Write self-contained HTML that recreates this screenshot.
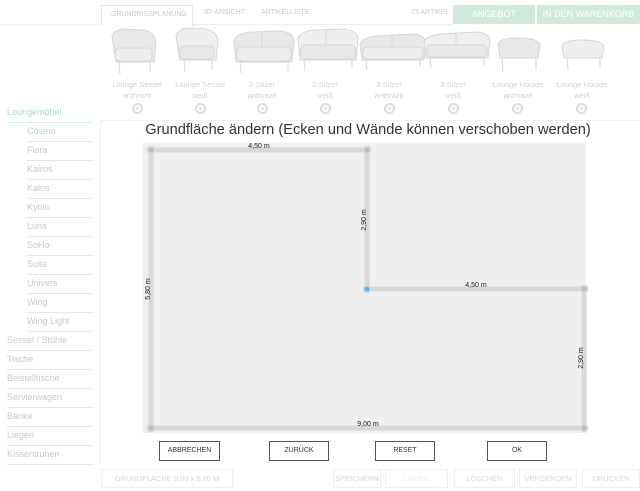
<!DOCTYPE html>
<html><head><meta charset="utf-8"><style>
*{margin:0;padding:0;box-sizing:border-box}
body{width:640px;height:491px;background:#fff;font-family:"Liberation Sans",sans-serif;position:relative;overflow:hidden}
.a{position:absolute;white-space:nowrap}
.tab{font-size:7px;color:#c8c8c8;top:9px}
.lbl{font-size:7.5px;color:#d0d0d0;text-align:center;width:64px;line-height:11px;top:79px}
.dot{width:11px;height:11px;border-radius:50%;border:2px solid #ddd;top:103px}
.dot:after{content:"";position:absolute;left:2px;top:2px;width:3px;height:3px;border-radius:50%;background:#ddd}
.side{font-size:9px;color:#c8c8c8;height:19px;line-height:17px;border-bottom:1px solid #e4e4e4}
.btn{top:441px;height:20px;border:1px solid #555;font-size:7px;color:#333;text-align:center;line-height:18px}
.bb{top:469px;height:19px;border:1px solid #eee;font-size:7.5px;color:#d6d6d6;text-align:center;line-height:17px}
</style></head><body>
<div class="a" style="left:0;top:24px;width:100px;height:1px;background:#eee"></div>
<div class="a" style="left:193px;top:24px;width:260px;height:1px;background:#eee"></div>
<div class="a" style="left:101px;top:5px;width:92px;height:21px;border:1px solid #e4e4e4;border-bottom:none;background:#fff"></div>
<div class="a tab" style="left:111px;top:11px">GRUNDRISSPLANUNG</div>
<div class="a tab" style="left:203px">3D-ANSICHT</div>
<div class="a tab" style="left:261px">ARTIKELLISTE</div>
<div class="a tab" style="left:411px">23 ARTIKEL</div>
<div class="a" style="left:453px;top:5px;width:82px;height:19px;background:#cfe9db;color:#fff;font-size:9px;text-align:center;line-height:19px">ANGEBOT</div>
<div class="a" style="left:537px;top:5px;width:103px;height:19px;background:#cfe9db;color:#fff;font-size:9px;text-align:center;line-height:19px">IN DEN WARENKORB</div>

<svg class="a" style="left:100px;top:26px" width="540" height="50" viewBox="0 0 540 50" fill="#e8e8e8" stroke="#d6d6d6" stroke-width="1">
<g><path d="M12 10 Q14 4 24 3 L44 4 Q54 6 56 16 L54 36 L16 36 Z"/><rect x="15" y="22" width="37" height="13" rx="4" fill="#eeeeee"/><line x1="19" y1="36" x2="20" y2="48"/><line x1="50" y1="36" x2="50" y2="46"/></g>
<g><path d="M76 10 Q78 3 88 2 L106 3 Q118 6 118 16 L116 34 L80 34 Z" fill="#efefef"/><rect x="80" y="20" width="34" height="13" rx="4"/><line x1="84" y1="34" x2="85" y2="46"/><line x1="112" y1="34" x2="112" y2="44"/></g>
<g><path d="M134 14 Q136 8 150 6 L180 5 Q192 6 194 14 L192 36 L136 36 Z"/><line x1="162" y1="6" x2="162" y2="20"/><rect x="137" y="21" width="54" height="14" rx="4" fill="#eeeeee"/><line x1="140" y1="36" x2="141" y2="47"/><line x1="188" y1="36" x2="188" y2="45"/></g>
<g><path d="M198 12 Q200 6 214 4 L244 3 Q256 4 258 12 L256 34 L200 34 Z" fill="#efefef"/><line x1="226" y1="4" x2="226" y2="18"/><rect x="201" y="19" width="54" height="14" rx="4"/><line x1="204" y1="34" x2="205" y2="45"/><line x1="252" y1="34" x2="252" y2="43"/></g>
<g><path d="M260 18 Q262 12 276 10 L314 8 Q324 9 326 16 L324 34 L262 34 Z"/><line x1="292" y1="9" x2="292" y2="22"/><rect x="263" y="21" width="60" height="12" rx="4" fill="#eeeeee"/><line x1="266" y1="34" x2="267" y2="44"/><line x1="320" y1="34" x2="320" y2="41"/></g>
<g><path d="M324 16 Q326 10 340 8 L378 6 Q388 7 390 14 L388 32 L326 32 Z" fill="#efefef"/><line x1="356" y1="7" x2="356" y2="20"/><rect x="327" y="19" width="60" height="12" rx="4"/><line x1="330" y1="32" x2="331" y2="42"/><line x1="384" y1="32" x2="384" y2="39"/></g>
<g><path d="M398 18 Q400 12 418 12 Q436 12 440 18 L438 32 L400 32 Z"/><line x1="402" y1="32" x2="403" y2="46"/><line x1="436" y1="32" x2="436" y2="44"/></g>
<g><path d="M462 20 Q464 14 482 14 Q500 14 504 20 L502 32 L464 32 Z" fill="#efefef"/><line x1="467" y1="32" x2="468" y2="44"/><line x1="500" y1="32" x2="500" y2="42"/></g>
</svg>

<div class="a lbl" style="left:105px">Lounge Sessel<br>anthrazit</div>
<div class="a lbl" style="left:168px">Lounge Sessel<br>weiß</div>
<div class="a lbl" style="left:230px">2-Sitzer<br>anthrazit</div>
<div class="a lbl" style="left:293px">2-Sitzer<br>weiß</div>
<div class="a lbl" style="left:357px">3-Sitzer<br>anthrazit</div>
<div class="a lbl" style="left:421px">3-Sitzer<br>weiß</div>
<div class="a lbl" style="left:486px">Lounge Hocker<br>anthrazit</div>
<div class="a lbl" style="left:550px">Lounge Hocker<br>weiß</div>
<div class="a dot" style="left:132px"></div><div class="a dot" style="left:195px"></div><div class="a dot" style="left:257px"></div><div class="a dot" style="left:320px"></div><div class="a dot" style="left:384px"></div><div class="a dot" style="left:448px"></div><div class="a dot" style="left:512px"></div><div class="a dot" style="left:576px"></div>

<div class="a side" style="left:7px;top:104px;width:86px;color:#a8d9c0;border-color:#d8efe3">Loungemöbel</div>
<div class="a side" style="left:27px;top:123px;width:66px;color:#a8d9c0;border-color:#d8efe3">Cosmo</div>
<div class="a side" style="left:27px;top:142px;width:66px">Flora</div>
<div class="a side" style="left:27px;top:161px;width:66px">Kairos</div>
<div class="a side" style="left:27px;top:180px;width:66px">Kalos</div>
<div class="a side" style="left:27px;top:199px;width:66px">Kyoto</div>
<div class="a side" style="left:27px;top:218px;width:66px">Luna</div>
<div class="a side" style="left:27px;top:237px;width:66px">SoHo</div>
<div class="a side" style="left:27px;top:256px;width:66px">Suite</div>
<div class="a side" style="left:27px;top:275px;width:66px">Univers</div>
<div class="a side" style="left:27px;top:294px;width:66px">Wing</div>
<div class="a side" style="left:27px;top:313px;width:66px">Wing Light</div>
<div class="a side" style="left:7px;top:332px;width:86px">Sessel / Stühle</div>
<div class="a side" style="left:7px;top:351px;width:86px">Tische</div>
<div class="a side" style="left:7px;top:370px;width:86px">Beistelltische</div>
<div class="a side" style="left:7px;top:389px;width:86px">Servierwagen</div>
<div class="a side" style="left:7px;top:408px;width:86px">Bänke</div>
<div class="a side" style="left:7px;top:427px;width:86px">Liegen</div>
<div class="a side" style="left:7px;top:446px;width:86px">Kissentruhen</div>

<div class="a" style="left:100px;top:120px;width:540px;height:345px;border-left:1px solid #f0f0f0;border-top:1px solid #f0f0f0"></div>
<div class="a" style="left:100px;top:122px;width:536px;text-align:center;font-size:14.6px;color:#333">Grundfläche ändern (Ecken und Wände können verschoben werden)</div>

<svg class="a" style="left:0;top:0" width="640" height="491">
<rect x="143" y="143" width="443" height="290" fill="#efefef"/>
<polyline points="151,150 367,150 367,289 584,289 584,428 151,428 151,150" fill="none" stroke="#d8d8d8" stroke-width="5"/>
<g fill="#bbb" stroke="#d8d8d8" stroke-width="2"><circle cx="151" cy="150" r="3.5"/><circle cx="367" cy="150" r="3.5"/><circle cx="584" cy="289" r="3.5"/><circle cx="584" cy="428" r="3.5"/><circle cx="151" cy="428" r="3.5"/></g>
<circle cx="367" cy="289" r="3.5" fill="#5fb0e8" stroke="#bfe0f6" stroke-width="2"/>
<g font-family="Liberation Sans" font-size="7" fill="#222">
<text x="259" y="148" text-anchor="middle">4,50 m</text>
<text x="476" y="287" text-anchor="middle">4,50 m</text>
<text x="368" y="426" text-anchor="middle">9,00 m</text>
<text transform="translate(366,220) rotate(-90)" text-anchor="middle">2,90 m</text>
<text transform="translate(583,358) rotate(-90)" text-anchor="middle">2,90 m</text>
<text transform="translate(150,289) rotate(-90)" text-anchor="middle">5,80 m</text>
</g>
</svg>

<div class="a btn" style="left:159px;width:61px">ABBRECHEN</div>
<div class="a btn" style="left:269px;width:60px">ZURÜCK</div>
<div class="a btn" style="left:375px;width:60px">RESET</div>
<div class="a btn" style="left:487px;width:60px">OK</div>

<div class="a bb" style="left:101px;width:132px">GRUNDFLÄCHE 9,00 x 5,80 M</div>
<div class="a bb" style="left:333px;width:48px">SPEICHERN</div>
<div class="a bb" style="left:385px;width:63px;color:#eee">LADEN</div>
<div class="a bb" style="left:454px;width:61px">LÖSCHEN</div>
<div class="a bb" style="left:519px;width:58px">VERSENDEN</div>
<div class="a bb" style="left:582px;width:58px">DRUCKEN</div>
</body></html>
